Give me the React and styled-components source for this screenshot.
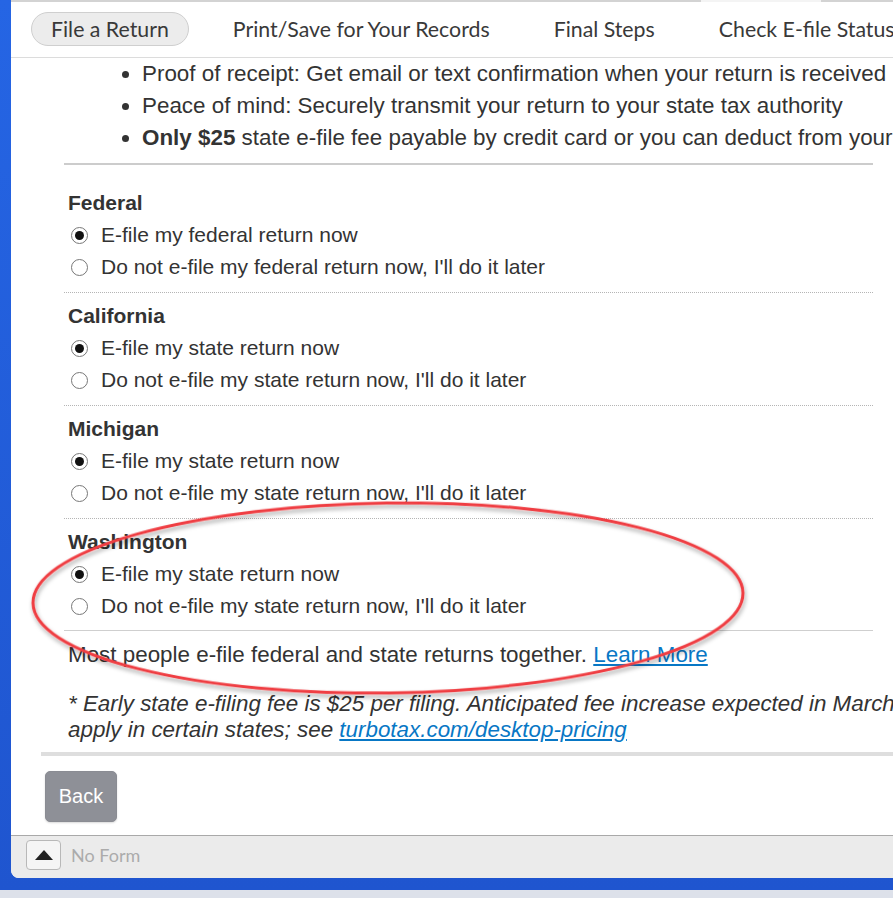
import React from 'react'
import styled, { createGlobalStyle } from 'styled-components'

const GlobalStyle = createGlobalStyle`
  html, body { margin: 0; padding: 0; overflow: hidden; background: #dde1ea; }
  * { box-sizing: border-box; }
`

const tabs = ['File a Return', 'Print/Save for Your Records', 'Final Steps', 'Check E-file Status']

const bullets = [
  { text: 'Proof of receipt: Get email or text confirmation when your return is received' },
  { text: 'Peace of mind: Securely transmit your return to your state tax authority' },
  { strong: 'Only $25', text: ' state e-file fee payable by credit card or you can deduct from your refund' },
]

const groups = [
  { title: 'Federal', yes: 'E-file my federal return now', no: "Do not e-file my federal return now, I'll do it later" },
  { title: 'California', yes: 'E-file my state return now', no: "Do not e-file my state return now, I'll do it later" },
  { title: 'Michigan', yes: 'E-file my state return now', no: "Do not e-file my state return now, I'll do it later" },
  { title: 'Washington', yes: 'E-file my state return now', no: "Do not e-file my state return now, I'll do it later" },
]

function App() {
  return (
    <>
      <GlobalStyle />
      <Screen>
        <Desktop>
          <Window>
            <TopStrip><Thumb /></TopStrip>
            <NavBar>
              {tabs.map((t, i) => (
                <Tab key={t} active={i === 0}>{t}</Tab>
              ))}
            </NavBar>
            <Content>
              <BulletList>
                {bullets.map((b, i) => (
                  <li key={i}>
                    {b.strong && <strong>{b.strong}</strong>}
                    {b.text}
                  </li>
                ))}
              </BulletList>
              <Rule />
              <Groups>
                {groups.map((g, i) => (
                  <Group key={g.title} last={i === groups.length - 1}>
                    <GroupTitle>{g.title}</GroupTitle>
                    <Option><Radio checked />{g.yes}</Option>
                    <Option><Radio />{g.no}</Option>
                  </Group>
                ))}
              </Groups>
              <Note>
                Most people e-file federal and state returns together. <Link href="#">Learn More</Link>
              </Note>
              <Fine>
                * Early state e-filing fee is $25 per filing. Anticipated fee increase expected in March. Fees
                <br />
                apply in certain states; see <Link href="#">turbotax.com/desktop-pricing</Link>
              </Fine>
            </Content>
            <ButtonArea>
              <BackButton>Back</BackButton>
            </ButtonArea>
            <Footer>
              <FormToggle>
                <svg width="18" height="10" viewBox="0 0 18 10">
                  <polygon points="9,0 18,10 0,10" fill="#222" />
                </svg>
              </FormToggle>
              <FooterText>No Form</FooterText>
            </Footer>
            <Annotation viewBox="0 0 882 878" width="882" height="878">
              <defs>
                <filter id="sh" x="-10%" y="-10%" width="120%" height="130%">
                  <feDropShadow dx="1" dy="3" stdDeviation="2" floodColor="#000" floodOpacity="0.35" />
                </filter>
              </defs>
              <ellipse cx="377" cy="598" rx="355" ry="95" fill="none" stroke="#ef3e42" strokeWidth="3" filter="url(#sh)" transform="rotate(-0.8 377 598)" />
            </Annotation>
          </Window>
        </Desktop>
        <Taskbar />
      </Screen>
    </>
  )
}

export default App

const Screen = styled.div`
  width: 893px;
  height: 898px;
  display: flex;
  flex-direction: column;
  overflow: hidden;
`
const Desktop = styled.div`
  flex: 1;
  background: linear-gradient(180deg, #2565e4, #1f55cf);
  padding: 0 0 12px 11px;
  display: flex;
`
const Window = styled.div`
  position: relative;
  flex: 1;
  background: #fff;
  border-bottom-left-radius: 8px;
  display: flex;
  flex-direction: column;
  overflow: hidden;
`
const TopStrip = styled.div`
  height: 2px;
  background: #d3d3d3;
  display: flex;
`
const Thumb = styled.div`
  margin-left: 690px;
  width: 120px;
  background: #f4f4f4;
`
const NavBar = styled.nav`
  height: 56px;
  border-bottom: 1px solid #dcdcdc;
  display: flex;
  align-items: center;
  gap: 24px;
  padding: 0 0 1px 20px;
  white-space: nowrap;
`
const Tab = styled.div`
  font-family: Lato, "Open Sans", sans-serif;
  font-size: 21.3px;
  color: #393939;
  height: 34px;
  line-height: 32px;
  padding: 0 19px;
  border-radius: 17px;
  border: 1px solid ${(p) => (p.active ? '#cfcfcf' : 'transparent')};
  background: ${(p) => (p.active ? '#ececec' : 'transparent')};
  flex-shrink: 0;
`
const Content = styled.div`
  padding-left: 53px;
  width: 862px;
  font-family: "Liberation Sans", Arial, sans-serif;
  font-size: 22.4px;
  color: #333;
  white-space: nowrap;
`
const BulletList = styled.ul`
  margin: 0;
  padding: 0 0 0 78px;
  list-style: disc;
  line-height: 32px;
  strong { font-weight: 700; }
`
const Rule = styled.div`
  height: 2px;
  background: #cccccc;
  margin: 9px 0 15px;
`
const Groups = styled.div`
  display: flex;
  flex-direction: column;
  font-size: 21px;
`
const Group = styled.div`
  padding: 7px 0 ${(p) => (p.last ? 8 : 9)}px 4px;
  border-bottom: 1px ${(p) => (p.last ? 'solid #cfcfcf' : 'dotted #b5b5b5')};
  line-height: 32px;
`
const GroupTitle = styled.div`
  font-weight: 700;
  color: #333;
`
const Option = styled.label`
  display: flex;
  align-items: center;
  gap: 13px;
  padding-left: 3px;
  height: 32px;
`
const Radio = styled.span`
  width: 17px;
  height: 17px;
  border-radius: 50%;
  border: 1px solid #777;
  background: #fff;
  display: flex;
  align-items: center;
  justify-content: center;
  flex-shrink: 0;
  &::after {
    content: '';
    width: 9px;
    height: 9px;
    border-radius: 50%;
    background: ${(p) => (p.checked ? '#111' : 'transparent')};
  }
`
const Note = styled.p`
  margin: 8px 0 0 4px;
  line-height: 32px;
`
const Link = styled.a`
  color: #0877c5;
  text-decoration: underline;
`
const Fine = styled.p`
  margin: 20px 0 0 4px;
  font-style: italic;
  line-height: 26px;
`
const ButtonArea = styled.div`
  margin: 9px 0 0 30px;
  border-top: 4px solid #dedede;
  padding: 15px 0 12px 4px;
  height: 83px;
`
const BackButton = styled.button`
  width: 72px;
  height: 51px;
  border: 1px solid #8a8c93;
  border-radius: 5px;
  background: #8e9097;
  color: #fff;
  font-family: "Liberation Sans", Arial, sans-serif;
  font-size: 20px;
  box-shadow: 0 1px 2px rgba(0, 0, 0, 0.15);
`
const Footer = styled.div`
  flex: 1;
  margin-top: auto;
  background: #ebebeb;
  border-top: 1px solid #a9a9a9;
  display: flex;
  align-items: center;
  gap: 10px;
  padding: 0 0 4px 15px;
`
const FormToggle = styled.div`
  width: 35px;
  height: 30px;
  border: 1px solid #b8b8b8;
  border-radius: 4px;
  background: #f5f5f5;
  display: flex;
  align-items: center;
  justify-content: center;
`
const FooterText = styled.span`
  font-family: Lato, "Open Sans", sans-serif;
  font-size: 18px;
  color: #ababab;
`
const Annotation = styled.svg`
  position: absolute;
  left: 0;
  top: 0;
  pointer-events: none;
`
const Taskbar = styled.div`
  height: 8px;
  background: #dde1ea;
`
